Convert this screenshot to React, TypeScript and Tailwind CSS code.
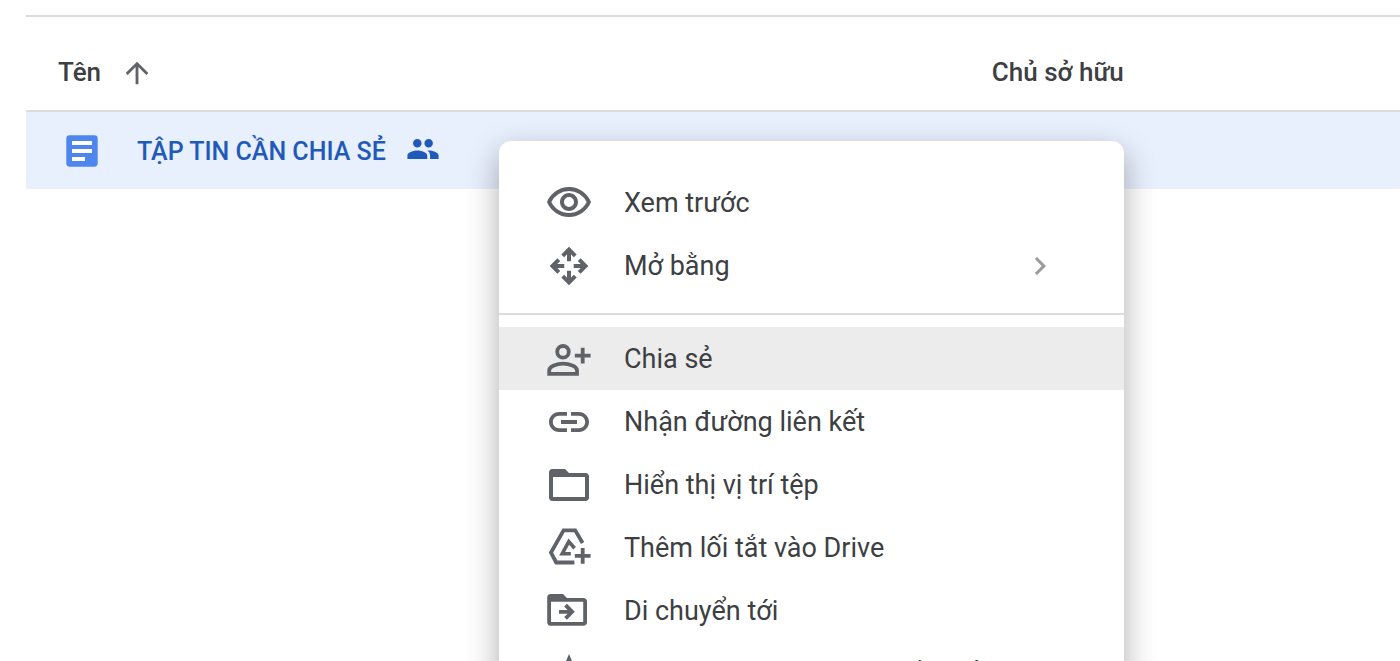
import type { ReactNode } from "react";
import {
  MdArrowUpward,
  MdChevronRight,
  MdLink,
  MdOutlineVisibility,
  MdPeople,
  MdStarBorder,
} from "react-icons/md";

type MenuEntry = {
  label: string;
  icon: ReactNode;
  hasSubmenu?: boolean;
  active?: boolean;
};

function DocIcon() {
  return (
    <svg viewBox="0 0 32 32" className="size-8 shrink-0" aria-hidden="true">
      <rect x=".3" y=".3" width="31.4" height="31.4" rx="3.4" fill="#4c86ee" />
      <path d="M6 6h20v4H6zM6 14h20v4H6zM6 22h13v4H6z" fill="#fff" />
    </svg>
  );
}

function OpenWithIcon() {
  return (
    <svg viewBox="0 0 48 48" className="size-12" fill="none" stroke="currentColor" strokeWidth="4" aria-hidden="true">
      <path d="M24 19.3V8M17.7 13.8L24 7.5l6.3 6.3" />
      <path d="M24 28.7V40M17.7 34.2L24 40.5l6.3-6.3" />
      <path d="M19.3 24H8M13.8 17.7L7.5 24l6.3 6.3" />
      <path d="M28.7 24H40M34.2 17.7L40.5 24l-6.3 6.3" />
    </svg>
  );
}

function PersonAddIcon() {
  return (
    <svg viewBox="0 0 48 48" className="size-12" fill="none" stroke="currentColor" strokeWidth="3.8" aria-hidden="true">
      <circle cx="18" cy="16.8" r="5.8" />
      <path d="M4.2 38.8V35.2C4.2 31.4 12 28.6 18.1 28.6S32 31.4 32 35.2V38.8Z" />
      <path d="M37.7 12.8v15.8M29.8 20.7h15.8" />
    </svg>
  );
}

function FolderIcon() {
  return (
    <svg viewBox="0 0 24 24" className="size-12" fill="currentColor" aria-hidden="true">
      <path d="M20.3 6H12l-2-2H3.6C2.7 4 2 4.7 2 5.6v12.8c0 .9.7 1.6 1.6 1.6h16.7c.9 0 1.7-.7 1.7-1.6V7.6c0-.9-.8-1.6-1.7-1.6zM20 18H4V8h16v10z" />
    </svg>
  );
}

function AddShortcutIcon() {
  return (
    <svg viewBox="0 0 48 48" className="size-12" fill="none" stroke="currentColor" strokeWidth="3.8" aria-hidden="true">
      <path d="M37.6 19L30.2 6.4H18.6L6 28.6l5.2 9.9h18.2" />
      <path strokeWidth="3.6" d="M29.6 24.2L23.8 17.6l-6.6 12.1h8.6" />
      <path d="M37.7 24v15.8M29.8 31.9h15.8" />
    </svg>
  );
}

function MoveToIcon() {
  return (
    <svg viewBox="0 0 48 48" className="size-12" fill="currentColor" aria-hidden="true">
      <path d="M38.6 11H22l-4-4H5.4C3.6 7 2.2 8.4 2.2 10.2v25.4c0 1.8 1.4 3.2 3.2 3.2h33.2c1.8 0 3.4-1.4 3.4-3.2V14.2c0-1.8-1.6-3.2-3.4-3.2zM38.2 35H6V14.8h32.2V35z" />
      <path d="M14 22.9h8.6l-3.4-3.4 2.7-2.7 7.9 8-7.9 8-2.7-2.7 3.4-3.4H14z" />
    </svg>
  );
}

const openItems: MenuEntry[] = [
  { label: "Xem trước", icon: <MdOutlineVisibility className="size-12" /> },
  { label: "Mở bằng", icon: <OpenWithIcon />, hasSubmenu: true },
];

const fileItems: MenuEntry[] = [
  { label: "Chia sẻ", icon: <PersonAddIcon />, active: true },
  { label: "Nhận đường liên kết", icon: <MdLink className="size-12" /> },
  { label: "Hiển thị vị trí tệp", icon: <FolderIcon /> },
  { label: "Thêm lối tắt vào Drive", icon: <AddShortcutIcon /> },
  { label: "Di chuyển tới", icon: <MoveToIcon /> },
  { label: "Thêm vào thư mục Có gắn dấu sao", icon: <MdStarBorder className="size-12" /> },
];

function MenuItem({ label, icon, hasSubmenu, active }: MenuEntry) {
  return (
    <button
      type="button"
      role="menuitem"
      className={`flex h-[63px] w-full items-center gap-[31px] pl-[46px] pr-[66px] text-left text-[27px] text-[#3c4043] ${
        active ? "bg-[#ececec]" : "bg-white"
      }`}
    >
      <span className="shrink-0 text-[#5f6368]">{icon}</span>
      <span className="flex-1 whitespace-nowrap pt-0.5">{label}</span>
      {hasSubmenu && <MdChevronRight className="size-9 shrink-0 text-[#9a9a9a]" aria-hidden="true" />}
    </button>
  );
}

export default function App() {
  return (
    <main className="relative h-screen overflow-hidden bg-white pl-[26px] pt-[15px] font-['Roboto','Noto_Sans',sans-serif]">
      <table className="w-full table-fixed border-collapse border-t-2 border-[#dadce0] text-left">
        <thead>
          <tr className="h-[95px] border-b-2 border-[#dadce0] text-[26px] text-[#3c4043]">
            <th scope="col" className="w-[70%] pb-0 pl-8 pt-[18px] font-medium">
              <button type="button" className="flex items-center gap-[19px]">
                Tên
                <MdArrowUpward className="size-[34px] text-[#5f6368]" aria-hidden="true" />
              </button>
            </th>
            <th scope="col" className="pl-1 pt-[18px] font-medium">
              Chủ sở hữu
            </th>
          </tr>
        </thead>
        <tbody>
          <tr className="h-[78px] bg-[#e8effd] text-[25px] font-medium text-[#1f5abb]">
            <td className="pl-10">
              <div className="flex items-center">
                <DocIcon />
                <a href="#file" className="ml-[39px] pt-0.5">
                  TẬP TIN CẦN CHIA SẺ
                </a>
                <MdPeople className="mb-1 ml-5 size-[34px]" aria-label="Đã chia sẻ" />
              </div>
            </td>
            <td className="pl-1 pt-0.5">tôi</td>
          </tr>
        </tbody>
      </table>

      {/* Context menu */}
      <div
        role="menu"
        className="absolute left-[499px] top-[141px] w-[625px] overflow-hidden rounded-t-xl bg-white shadow-[0_12px_32px_rgba(0,0,0,0.32)]"
      >
        <div className="pb-4 pt-[30px]">
          {openItems.map((item) => (
            <MenuItem key={item.label} {...item} />
          ))}
        </div>
        <hr className="border-t-2 border-[#dadce0]" />
        <div className="pt-3">
          {fileItems.map((item) => (
            <MenuItem key={item.label} {...item} />
          ))}
        </div>
      </div>
    </main>
  );
}
